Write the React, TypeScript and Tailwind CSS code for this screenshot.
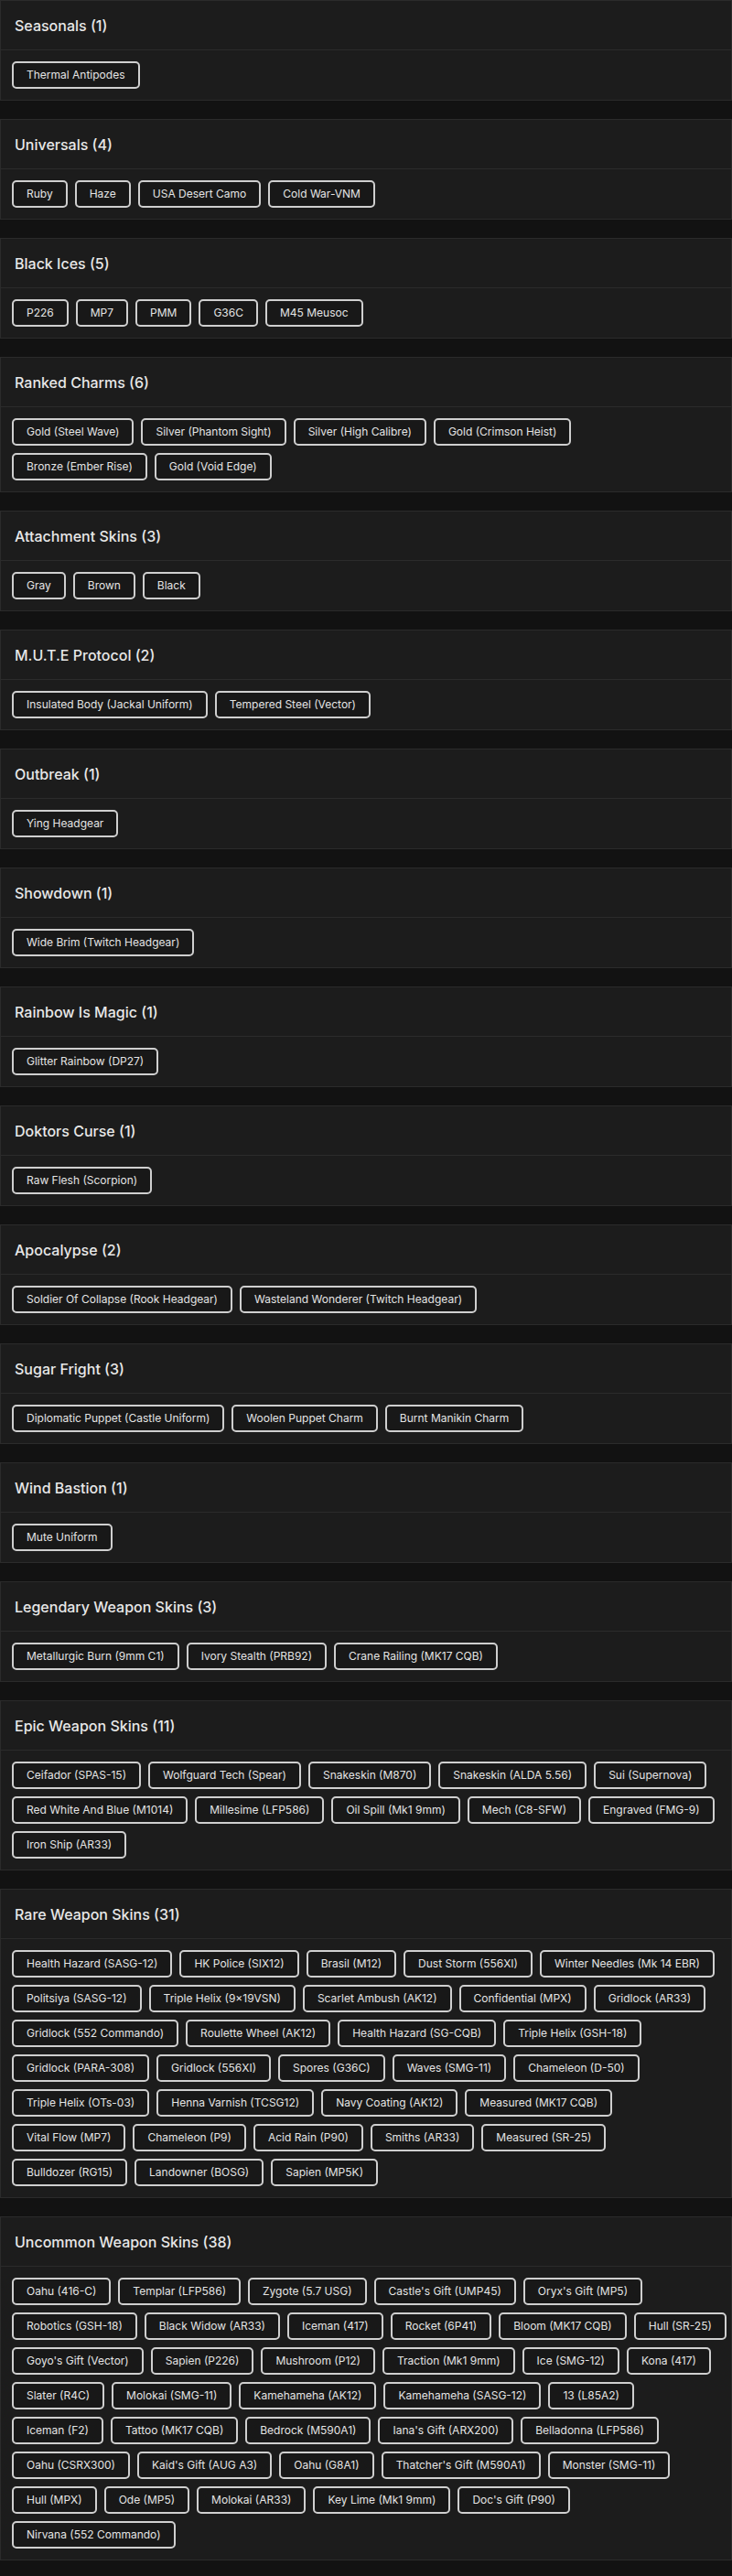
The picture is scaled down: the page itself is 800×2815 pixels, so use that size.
import React from "react"

type Section = { title: string; rows: string[][] }

const sections: Section[] = [
  { title: "Seasonals", rows: [["Thermal Antipodes"]] },
  { title: "Universals", rows: [["Ruby", "Haze", "USA Desert Camo", "Cold War-VNM"]] },
  { title: "Black Ices", rows: [["P226", "MP7", "PMM", "G36C", "M45 Meusoc"]] },
  {
    title: "Ranked Charms",
    rows: [
      ["Gold (Steel Wave)", "Silver (Phantom Sight)", "Silver (High Calibre)", "Gold (Crimson Heist)"],
      ["Bronze (Ember Rise)", "Gold (Void Edge)"],
    ],
  },
  { title: "Attachment Skins", rows: [["Gray", "Brown", "Black"]] },
  { title: "M.U.T.E Protocol", rows: [["Insulated Body (Jackal Uniform)", "Tempered Steel (Vector)"]] },
  { title: "Outbreak", rows: [["Ying Headgear"]] },
  { title: "Showdown", rows: [["Wide Brim (Twitch Headgear)"]] },
  { title: "Rainbow Is Magic", rows: [["Glitter Rainbow (DP27)"]] },
  { title: "Doktors Curse", rows: [["Raw Flesh (Scorpion)"]] },
  { title: "Apocalypse", rows: [["Soldier Of Collapse (Rook Headgear)", "Wasteland Wonderer (Twitch Headgear)"]] },
  { title: "Sugar Fright", rows: [["Diplomatic Puppet (Castle Uniform)", "Woolen Puppet Charm", "Burnt Manikin Charm"]] },
  { title: "Wind Bastion", rows: [["Mute Uniform"]] },
  {
    title: "Legendary Weapon Skins",
    rows: [["Metallurgic Burn (9mm C1)", "Ivory Stealth (PRB92)", "Crane Railing (MK17 CQB)"]],
  },
  {
    title: "Epic Weapon Skins",
    rows: [
      ["Ceifador (SPAS-15)", "Wolfguard Tech (Spear)", "Snakeskin (M870)", "Snakeskin (ALDA 5.56)", "Sui (Supernova)"],
      ["Red White And Blue (M1014)", "Millesime (LFP586)", "Oil Spill (Mk1 9mm)", "Mech (C8-SFW)", "Engraved (FMG-9)"],
      ["Iron Ship (AR33)"],
    ],
  },
  {
    title: "Rare Weapon Skins",
    rows: [
      ["Health Hazard (SASG-12)", "HK Police (SIX12)", "Brasil (M12)", "Dust Storm (556XI)", "Winter Needles (Mk 14 EBR)"],
      ["Politsiya (SASG-12)", "Triple Helix (9x19VSN)", "Scarlet Ambush (AK12)", "Confidential (MPX)", "Gridlock (AR33)"],
      ["Gridlock (552 Commando)", "Roulette Wheel (AK12)", "Health Hazard (SG-CQB)", "Triple Helix (GSH-18)"],
      ["Gridlock (PARA-308)", "Gridlock (556XI)", "Spores (G36C)", "Waves (SMG-11)", "Chameleon (D-50)"],
      ["Triple Helix (OTs-03)", "Henna Varnish (TCSG12)", "Navy Coating (AK12)", "Measured (MK17 CQB)"],
      ["Vital Flow (MP7)", "Chameleon (P9)", "Acid Rain (P90)", "Smiths (AR33)", "Measured (SR-25)"],
      ["Bulldozer (RG15)", "Landowner (BOSG)", "Sapien (MP5K)"],
    ],
  },
  {
    title: "Uncommon Weapon Skins",
    rows: [
      ["Oahu (416-C)", "Templar (LFP586)", "Zygote (5.7 USG)", "Castle's Gift (UMP45)", "Oryx's Gift (MP5)"],
      ["Robotics (GSH-18)", "Black Widow (AR33)", "Iceman (417)", "Rocket (6P41)", "Bloom (MK17 CQB)", "Hull (SR-25)"],
      ["Goyo's Gift (Vector)", "Sapien (P226)", "Mushroom (P12)", "Traction (Mk1 9mm)", "Ice (SMG-12)", "Kona (417)"],
      ["Slater (R4C)", "Molokai (SMG-11)", "Kamehameha (AK12)", "Kamehameha (SASG-12)", "13 (L85A2)"],
      ["Iceman (F2)", "Tattoo (MK17 CQB)", "Bedrock (M590A1)", "Iana's Gift (ARX200)", "Belladonna (LFP586)"],
      ["Oahu (CSRX300)", "Kaid's Gift (AUG A3)", "Oahu (G8A1)", "Thatcher's Gift (M590A1)", "Monster (SMG-11)"],
      ["Hull (MPX)", "Ode (MP5)", "Molokai (AR33)", "Key Lime (Mk1 9mm)", "Doc's Gift (P90)"],
      ["Nirvana (552 Commando)"],
    ],
  },
]

function Card({ section }: { section: Section }) {
  const count = section.rows.reduce((n, r) => n + r.length, 0)
  return (
    <div className="border border-[#2b2b2b] bg-[#1c1c1c]">
      <div className="h-[54px] flex items-center px-[15px] border-b border-[#2b2b2b]">
        <h2 className="text-[16px] leading-6 font-medium text-[#e8e8e8]">
          {section.title} ({count})
        </h2>
      </div>
      <div className="flex flex-col gap-2 p-3">
        {section.rows.map((row, i) => (
          <div key={i} className="flex gap-2">
            {row.map((item) => (
              <span
                key={item}
                className="h-[30px] shrink-0 flex items-center px-[14px] border-2 border-[#cfcfcf] rounded-[5px] bg-[#181818] text-[12px] text-[#e4e4e4] whitespace-nowrap"
              >
                {item}
              </span>
            ))}
          </div>
        ))}
      </div>
    </div>
  )
}

export default function App() {
  return (
    <main
      className="w-full min-h-screen bg-[#121212] flex flex-col gap-5"
      style={{ fontFamily: "Inter, 'Noto Sans', sans-serif" }}
    >
      {sections.map((s) => (
        <Card key={s.title} section={s} />
      ))}
    </main>
  )
}
